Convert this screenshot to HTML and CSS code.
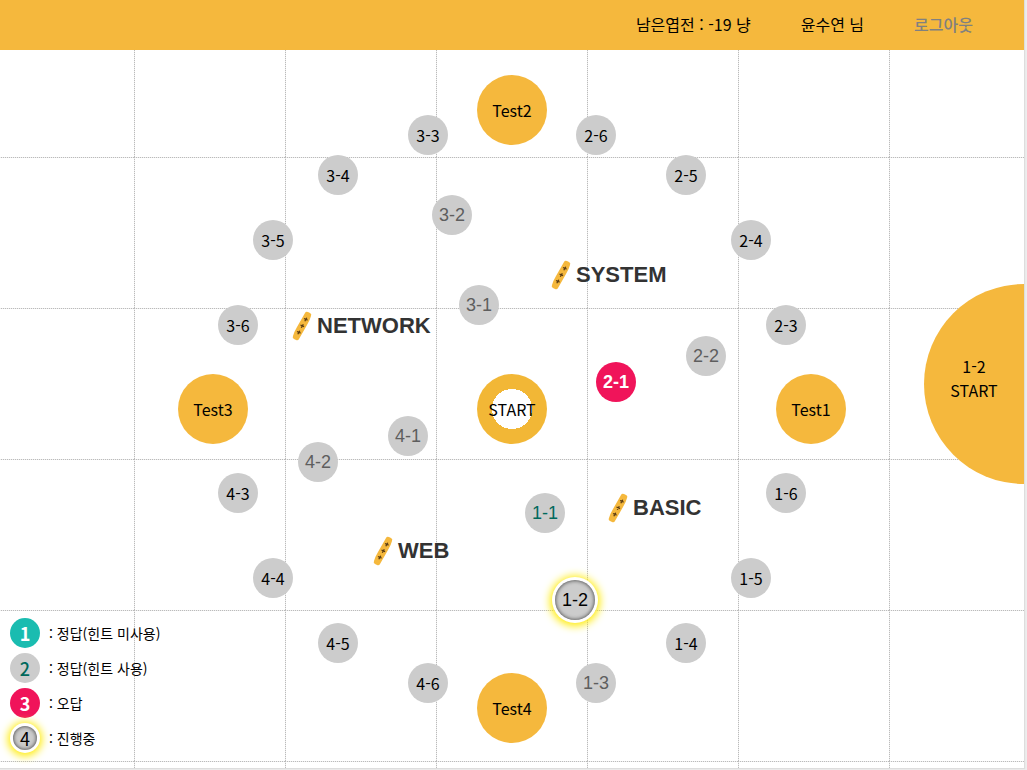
FILE: index.html
```
<!DOCTYPE html>
<html lang="ko">
<head>
<meta charset="utf-8">
<title>문제 지도</title>
<link rel="stylesheet" href="styles.css">
</head>
<body>
<svg class="defs" aria-hidden="true">
  <symbol id="yut" viewBox="0 0 20 30">
    <path d="M13 2Q14 0 16 1L18 2Q20 3 19 5Q18 9 15 14L7 28Q6 30 4 29L2 28Q0 27 1 25Q2 21 5 16Z" fill="#f5b83d"/>
    <path d="M12 7.500l3.600 1.600m-.8-2.400l-2 3.600M8.500 14l3.600 1.600m-.8-2.400l-2 3.600M5 20.500l3.600 1.600m-.8-2.400l-2 3.600" stroke="#5a3c14" stroke-width="1.300" fill="none"/>
  </symbol>
</svg>
<div class="page">
  <header class="topbar">
    <span>남은엽전 : -19 냥</span>
    <span>윤수연 님</span>
    <a class="logout" href="#">로그아웃</a>
  </header>
  <main class="board">
    <svg class="grid" aria-hidden="true">
      <defs>
        <pattern id="cells" x="134" y="107" width="151" height="151" patternUnits="userSpaceOnUse">
          <path d="M.5 0V151M0 .5H151" stroke="#bbb" stroke-dasharray="1 1" fill="none"/>
          <path d="M.5 0V151M0 .5H151" stroke="#eee" stroke-dasharray="1 1" stroke-dashoffset="1" fill="none"/>
        </pattern>
      </defs>
      <rect width="100%" height="100%" fill="url(#cells)"/>
    </svg>

    <h2 class="area area-system"><svg class="stick"><use href="#yut"/></svg>SYSTEM</h2>
    <h2 class="area area-network"><svg class="stick"><use href="#yut"/></svg>NETWORK</h2>
    <h2 class="area area-basic"><svg class="stick"><use href="#yut"/></svg>BASIC</h2>
    <h2 class="area area-web"><svg class="stick"><use href="#yut"/></svg>WEB</h2>

    <div class="node hub start">START</div>
    <div class="node hub test1">Test1</div>
    <div class="node hub test2">Test2</div>
    <div class="node hub test3">Test3</div>
    <div class="node hub test4">Test4</div>

    <button class="node open hinted n11">1-1</button>
    <button class="node open current n12">1-2</button>
    <button class="node open n13">1-3</button>
    <div class="node n14">1-4</div>
    <div class="node n15">1-5</div>
    <div class="node n16">1-6</div>
    <button class="node open wrong n21">2-1</button>
    <button class="node open n22">2-2</button>
    <div class="node n23">2-3</div>
    <div class="node n24">2-4</div>
    <div class="node n25">2-5</div>
    <div class="node n26">2-6</div>
    <button class="node open n31">3-1</button>
    <button class="node open n32">3-2</button>
    <div class="node n33">3-3</div>
    <div class="node n34">3-4</div>
    <div class="node n35">3-5</div>
    <div class="node n36">3-6</div>
    <button class="node open n41">4-1</button>
    <button class="node open n42">4-2</button>
    <div class="node n43">4-3</div>
    <div class="node n44">4-4</div>
    <div class="node n45">4-5</div>
    <div class="node n46">4-6</div>

    <ul class="legend">
      <li><span class="key key-right">1</span>: 정답(힌트 미사용)</li>
      <li><span class="key key-hinted">2</span>: 정답(힌트 사용)</li>
      <li><span class="key key-wrong">3</span>: 오답</li>
      <li><span class="key key-current">4</span>: 진행중</li>
    </ul>
  </main>
  <button class="go">1-2<br>START</button>
</div>
</body>
</html>
```
FILE: styles.css
```
* { box-sizing: border-box; }

body {
  margin: 0;
  padding: 0 3px 2px 0;
  background: #ededed;
  color: #000;
  font: 16px/24px "Noto Sans CJK KR", sans-serif;
}

.defs { position: absolute; width: 0; height: 0; }

.page {
  position: relative;
  display: flex;
  flex-direction: column;
  min-height: calc(100vh - 2px);
  background: #fff;
  box-shadow: 0 0 1px 1px #ddd;
}

.topbar {
  display: flex;
  justify-content: flex-end;
  align-items: center;
  gap: 50px;
  height: 50px;
  padding: 0 51px 2px;
  background: #f5b83d;
}

.logout { color: #808080; font-weight: 500; text-decoration: none; }

.board {
  position: relative;
  display: flex;
  flex: 1;
  align-items: flex-end;
}

.grid { position: absolute; inset: 0; width: 100%; height: 100%; }

/* Map items are placed by their offset from the centre of the board. */
.node {
  position: absolute;
  left: calc(50% + var(--x));
  top: calc(50% + var(--y));
  display: flex;
  align-items: center;
  justify-content: center;
  width: 40px;
  height: 40px;
  padding: 0;
  border: 0;
  border-radius: 50%;
  transform: translate(-50%, -50%);
  background: #ccc;
  color: #000;
}

.hub { width: 70px; height: 70px; background: #f5b83d; }
.start { background: radial-gradient(circle, #fff 20px, #f2b736 20px); }
.open { color: #5e5e5e; font: 18px/24px "Liberation Sans", sans-serif; }
.hinted { color: #00695c; }
.wrong { background: #f0145a; color: #fff; font-weight: bold; }
.current {
  color: #000;
  box-shadow: 0 0 0 3px #fff, 0 1px 8px 5px #ffeb00, inset 0 0 4px #333;
}

.start { --x: 0px; --y: 0px; }
.test1 { --x: 299px; --y: 0px; }
.test2 { --x: 0px; --y: -299px; }
.test3 { --x: -299px; --y: 0px; }
.test4 { --x: 0px; --y: 299px; }
.n11 { --x: 33px; --y: 104px; }
.n12 { --x: 63px; --y: 191px; }
.n13 { --x: 84px; --y: 274px; }
.n14 { --x: 174px; --y: 234px; }
.n15 { --x: 239px; --y: 169px; }
.n16 { --x: 274px; --y: 84px; }
.n21 { --x: 104px; --y: -27px; }
.n22 { --x: 194px; --y: -53px; }
.n23 { --x: 274px; --y: -84px; }
.n24 { --x: 239px; --y: -169px; }
.n25 { --x: 174px; --y: -234px; }
.n26 { --x: 84px; --y: -274px; }
.n31 { --x: -33px; --y: -104px; }
.n32 { --x: -60px; --y: -194px; }
.n33 { --x: -84px; --y: -274px; }
.n34 { --x: -174px; --y: -234px; }
.n35 { --x: -239px; --y: -169px; }
.n36 { --x: -274px; --y: -84px; }
.n41 { --x: -104px; --y: 27px; }
.n42 { --x: -194px; --y: 53px; }
.n43 { --x: -274px; --y: 84px; }
.n44 { --x: -239px; --y: 169px; }
.n45 { --x: -174px; --y: 234px; }
.n46 { --x: -84px; --y: 274px; }

.area {
  position: absolute;
  left: calc(50% + var(--x));
  top: calc(50% + var(--y));
  display: flex;
  align-items: center;
  gap: 5px;
  margin: 0;
  color: #333;
  font: bold 22px/30px "Liberation Sans", sans-serif;
}

.stick { width: 20px; height: 30px; }
.area-system { --x: 39px; --y: -149px; }
.area-network { --x: -220px; --y: -98px; }
.area-basic { --x: 96px; --y: 84px; }
.area-web { --x: -139px; --y: 127px; }

.legend {
  position: relative;
  display: flex;
  flex-direction: column;
  gap: 5px;
  margin: 0;
  padding: 0 10px 15px;
  list-style: none;
  font-size: 14px;
}

.legend li { display: flex; align-items: center; gap: 9px; }

.key {
  display: flex;
  align-items: center;
  justify-content: center;
  width: 30px;
  height: 30px;
  border-radius: 50%;
  font-size: 18px;
  font-weight: bold;
}

.key-right { background: #1abcb0; color: #fff; }
.key-hinted { background: #ccc; color: #00695c; font-weight: 500; }
.key-wrong { background: #f0145a; color: #fff; }
.key-current {
  width: 24px;
  height: 24px;
  margin: 3px;
  background: #ccc;
  font-weight: 400;
  box-shadow: 0 0 0 3px #fff, 0 1px 8px 5px #ffeb00, inset 0 0 4px #333;
}

.go {
  position: absolute;
  right: 0;
  top: calc(50% - 100px);
  width: 100px;
  height: 200px;
  padding: 0 0 12px;
  border: 0;
  border-radius: 100px 0 0 100px;
  background: #f5b83d;
  color: #000;
  font: inherit;
}
```
